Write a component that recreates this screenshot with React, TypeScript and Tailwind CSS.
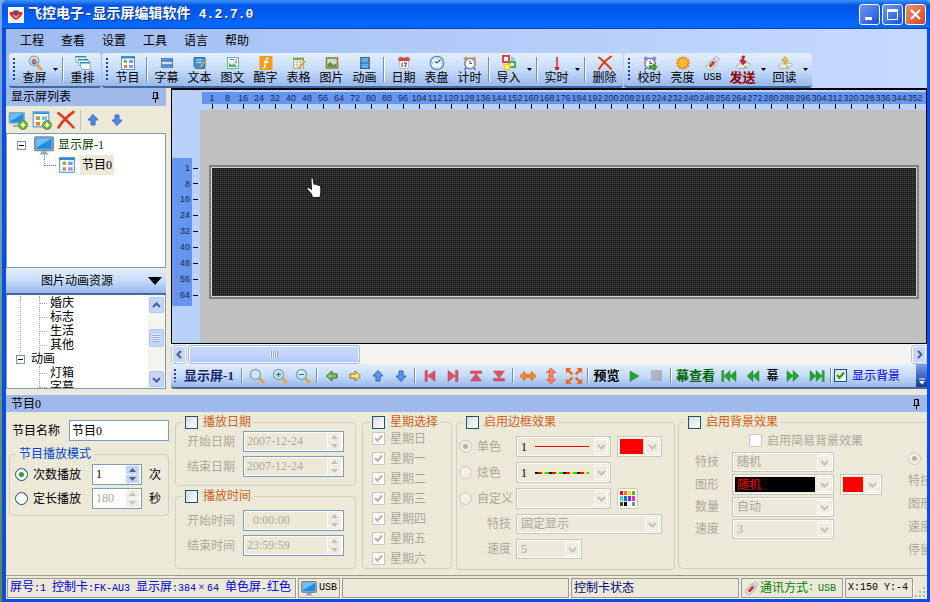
import { useState, type ReactNode } from 'react';
import clsx from 'clsx';

const BAR = 'bg-linear-to-b from-[#e4efff] via-[#c6dcfa] to-[#98b8ea] border-b-2 border-[#44689f]';
const MONO = "font-['Liberation_Mono','Noto_Sans_CJK_SC',monospace]";

function Svg({ children, size = 'size-4', box = '0 0 16 16' }: { children: ReactNode; size?: string; box?: string }) {
  return (
    <svg viewBox={box} className={clsx('shrink-0', size)} fill="none" aria-hidden="true">
      {children}
    </svg>
  );
}

/* ---------- icons ---------- */

const GridIcon = ({ size = 'size-4' }: { size?: string }) => (
  <Svg size={size}>
    <rect x="1.5" y="1.5" width="13" height="13" fill="#fff" stroke="#4b9fd8" />
    <path d="M1 2.5h14" stroke="#2f86cc" strokeWidth="2" />
    <path d="M4 5h3v3H4z" fill="#8fb03a" />
    <path d="M9 5h4v3H9z" fill="#5aa8e6" />
    <path d="M4 10h3v3H4z" fill="#ee7a4a" />
    <path d="M9 10h4v3H9z" fill="#a98be0" />
  </Svg>
);

const MonitorIcon = ({ size = 'size-5' }: { size?: string }) => (
  <Svg size={size}>
    <rect x="0.5" y="1.5" width="15" height="11" rx="1" fill="#8ca3b8" stroke="#7590aa" />
    <rect x="2" y="3" width="12" height="8" fill="#1f8ee8" />
    <path d="M2 3h12L2 10z" fill="#6cc0fa" />
    <path d="M6 13h4v1l2 1.500H4L6 14z" fill="#90a4b6" />
  </Svg>
);

const Plus = () => (
  <>
    <circle cx="12" cy="12" r="3.6" fill="#6fb52a" stroke="#4c9216" strokeWidth=".6" />
    <path d="M12 10v4M10 12h4" stroke="#fff" strokeWidth="1.3" />
  </>
);

const CrossIcon = ({ size = 'size-4' }: { size?: string }) => (
  <Svg size={size}>
    <path d="M2 2.5c4 3 8 7 12 11.5M14 1.5C9 5 5 9 2 14" stroke="#e8351a" strokeWidth="2" strokeLinecap="round" />
  </Svg>
);

const Magnifier = ({ sign }: { sign?: string }) => (
  <Svg>
    <path d="M10 10l4 4" stroke="#f0a030" strokeWidth="2.8" strokeLinecap="round" />
    <circle cx="6.5" cy="6.5" r="5" fill="#c4eafa" stroke="#8ea4b4" strokeWidth="1.4" />
    <path d="M3.500 6a3 3 0 0 1 3-2.500" stroke="#fff" />
    {sign && <path d={sign} stroke="#2a6ab0" strokeWidth="1.2" />}
  </Svg>
);

const ARROW = 'M8 2.5l5 5.5h-3v5H6V8H3z';
const ArrowIcon = ({ fill, stroke, turn = 0 }: { fill: string; stroke: string; turn?: number }) => (
  <Svg>
    <path d={ARROW} fill={fill} stroke={stroke} transform={`rotate(${turn} 8 8)`} />
  </Svg>
);

const AlignIcon = ({ turn = 0 }: { turn?: number }) => (
  <Svg>
    <g transform={`rotate(${turn} 8 8)`} fill="#dc5068" stroke="#b83c58" strokeWidth=".5">
      <path d="M3 2.500h2.400v11H3z" />
      <path d="M13 2.500v11L5.600 8z" />
    </g>
  </Svg>
);

const DoubleArrow = ({ turn = 0 }: { turn?: number }) => (
  <Svg size="size-[18px]">
    <path
      d="M1 8l4-4v2.400h6V4l4 4-4 4V9.600H5V12z"
      fill={turn ? '#ff8068' : '#ff8a2a'}
      stroke="#e0601a"
      strokeWidth=".8"
      transform={`rotate(${turn} 8 8)`}
    />
  </Svg>
);

const ExpandIcon = () => (
  <Svg size="size-[18px]">
    <path d="M2.500 2.500l4 4M13.500 2.500l-4 4M2.500 13.500l4-4M13.500 13.500l-4-4" stroke="#f0681c" strokeWidth="2.200" />
    <path d="M.8.8h5l-5 5zM15.200.8v5l-5-5zM.8 15.200v-5l5 5zM15.200 15.200h-5l5-5z" fill="#f0681c" />
  </Svg>
);

const GREEN = '#27a32e';
const PlayIcon = () => (
  <Svg>
    <path d="M4 3l9 5-9 5.500z" fill={GREEN} stroke="#1b8424" strokeWidth=".5" />
  </Svg>
);
const SkipIcon = ({ back, end }: { back?: boolean; end?: boolean }) => (
  <Svg>
    <g fill={GREEN} stroke="#177a20" strokeWidth=".4" transform={back ? 'rotate(180 8 8)' : undefined}>
      <path d="M1 2.500L7 8l-6 5.500zM7 2.500L13 8l-6 5.500z" />
      {end && <path d="M13.200 2.500h2v11h-2z" />}
    </g>
  </Svg>
);

const SearchScreenIcon = () => (
  <Svg>
    <path d="M10 10l4 4" stroke="#eaa23a" strokeWidth="3" strokeLinecap="round" />
    <circle cx="7" cy="6" r="4.800" fill="#cfeafa" stroke="#8aa0b8" strokeWidth="1.300" />
    <path d="M4 6l3-3 3 3-3 2z" fill="#f0602a" />
    <path d="M5 7l2 2 3-2" stroke="#2d6fd0" strokeWidth="1.400" />
  </Svg>
);

const RearrangeIcon = () => (
  <Svg>
    <path d="M.5 1.500h10l1 6h-10z" fill="#fff" stroke="#6aa4bc" strokeWidth=".8" />
    <path d="M3 4.500h10l1 6H4z" fill="#fff" stroke="#6aa4bc" strokeWidth=".8" />
    <path d="M5 7.500h10l.5 7H6.500z" fill="#fff" stroke="#6aa4bc" strokeWidth=".8" />
    <path d="M.5 1.800h10M3 4.800h10M5 7.800h10" stroke="#2f8aa8" strokeWidth="1.600" />
  </Svg>
);

const SubtitleIcon = () => (
  <Svg>
    <rect x="2.500" y="3.500" width="11" height="9" fill="#9cc4ee" stroke="#4a82c8" />
    <path d="M3 5.500h10M3 10.500h10" stroke="#3f78c0" strokeWidth="2" />
    <path d="M3 8h10" stroke="#fff" />
  </Svg>
);

const TextDocIcon = () => (
  <Svg>
    <path d="M2 2.500h11v11H4l-2-2z" fill="#3f92d6" stroke="#2d74b8" />
    <path d="M4.500 5h6M4.500 7.500h5" stroke="#d6ecff" />
    <path d="M14 6l-5 6-1.500 1.500.5-2.500 5-6z" fill="#f2c84a" stroke="#9a7a30" strokeWidth=".6" />
  </Svg>
);

const ImageTextIcon = () => (
  <Svg>
    <rect x="2.500" y="2.500" width="11" height="11" fill="#eef8ff" stroke="#62b4e4" />
    <path d="M5 4.500h4M11 4.500h1" stroke="#3f8ac8" />
    <path d="M4 12V8l3 2 2-2 3 4z" fill="#68b04a" />
    <circle cx="11" cy="7" r="1.300" fill="#f09030" />
  </Svg>
);

const CoolTextIcon = () => (
  <Svg>
    <rect x="1.500" y="1" width="13" height="14" fill="#f59b16" />
    <path d="M10.500 3.500c-2-.6-2.500 1-2.700 2.500L7 11c-.3 1.600-1 2-2 1.600M5.500 7h5" stroke="#fff" strokeWidth="1.500" />
  </Svg>
);

const TableIcon = () => (
  <Svg>
    <rect x="2.500" y="3" width="10" height="10" fill="#fffdf0" stroke="#a0a890" />
    <path d="M2 4h11" stroke="#6fae48" strokeWidth="2" />
    <path d="M2.500 7h10M2.500 10h10M6 4v9M9.500 4v9" stroke="#b8b090" strokeWidth=".8" />
    <path d="M14 6l-5 6-1 1.800" stroke="#e09a30" strokeWidth="1.800" />
  </Svg>
);

const PictureIcon = () => (
  <Svg>
    <rect x="2.500" y="3" width="11" height="10" fill="#bfe4f8" stroke="#a8772c" strokeWidth="1.600" />
    <path d="M3.500 12V9l3-2 3 3 3-2v4z" fill="#4f9c3a" />
    <circle cx="10.500" cy="6" r="1.200" fill="#f4d040" />
  </Svg>
);

const FilmIcon = () => (
  <Svg>
    <rect x="3" y="2" width="10" height="12" fill="#3a5f8a" />
    <path d="M5 3h6v4.500H5zM5 8.500h6V13H5z" fill="#58b0f0" />
    <path d="M4 3v10M12 3v10" stroke="#d8e8f8" strokeDasharray="1 1" strokeWidth=".8" />
  </Svg>
);

const CalendarIcon = () => (
  <Svg>
    <path d="M3 4h10l-1 9.500H4z" fill="#fff" stroke="#a8a8a8" strokeWidth=".8" />
    <path d="M2.500 2.500h11v3.500h-11z" fill="#d8452c" />
    <path d="M6 8v4M8 8h2.500L9 12" stroke="#333" />
    <path d="M5 1.500v2M11 1.500v2" stroke="#777" />
  </Svg>
);

const ClockIcon = () => (
  <Svg>
    <circle cx="8" cy="8" r="6.600" fill="#eef6ff" stroke="#4a90d8" strokeWidth="1.400" />
    <path d="M8 8l3.500-3.500M8 8l-2-1.500" stroke="#2a5fa8" strokeWidth="1.200" />
    <path d="M8 2.800v1M8 12.200v1M2.800 8h1M12.200 8h1" stroke="#5a7aa0" />
  </Svg>
);

const AlarmIcon = ({ sync }: { sync?: boolean }) => (
  <Svg>
    <circle cx="3.800" cy="3.500" r="2" fill={sync ? '#8f86dc' : '#e8a040'} />
    <circle cx="12.200" cy="3.500" r="2" fill={sync ? '#8f86dc' : '#e8a040'} />
    <path d="M4 13l-1.500 2M12 13l1.500 2" stroke="#6a6090" strokeWidth="1.400" />
    <circle cx="8" cy="8.500" r="5.200" fill="#fdfbe8" stroke="#7f78c8" strokeWidth="1.500" />
    <path d="M8 5.500v3h2" stroke="#444" />
    {sync && <path d="M7 10.500h4V8.500l4.500 3.500-4.500 3.500v-2H7z" fill="#4aa82a" stroke="#2f7f18" strokeWidth=".5" />}
  </Svg>
);

const ImportIcon = () => (
  <Svg>
    <rect x="2" y="1" width="6" height="6" fill="#fff" stroke="#e0303c" strokeWidth="1.800" />
    <path d="M10 1l4 2-1 4h-3z" fill="#9cc4f0" />
    <rect x="8.500" y="7" width="5.500" height="5" fill="#fff" stroke="#2cae3c" strokeWidth="1.800" />
    <rect x="3.500" y="9.500" width="5" height="5" fill="#fff" stroke="#f2d020" strokeWidth="2" />
  </Svg>
);

const ThermoIcon = () => (
  <Svg>
    <path d="M8 1v11" stroke="#dcdcdc" strokeWidth="3" />
    <path d="M8 2v10" stroke="#d8202c" strokeWidth="1.400" />
    <path d="M5.500 12h5l-1 3h-3z" fill="#d8202c" />
  </Svg>
);

const SunIcon = () => (
  <Svg>
    <path
      d="M8 .5l1.300 2.300L11.700 1.500l.2 2.700 2.700-.1-1.200 2.400L15.500 8l-2.100 1.500 1.200 2.400-2.700-.1-.2 2.700-2.400-1.300L8 15.500l-1.300-2.300-2.400 1.300-.2-2.700-2.700.1 1.200-2.400L.5 8l2.100-1.500-1.200-2.400 2.700.1.2-2.700 2.400 1.300z"
      fill="#f08a1c"
    />
    <circle cx="8" cy="8" r="4.500" fill="#ffb930" />
  </Svg>
);

const UsbIcon = () => (
  <Svg>
    <g transform="rotate(42 8 8)">
      <rect x="5" y="4.500" width="6" height="11" rx="1.500" fill="#f4f4f4" stroke="#9a9a9a" strokeWidth=".8" />
      <rect x="6" y="1" width="4" height="3.500" fill="#e8eef4" stroke="#8a96a4" strokeWidth=".8" />
      <path d="M6.500 6h3v7h-3z" fill="#dc3428" />
    </g>
  </Svg>
);

const DriveIcon = ({ up }: { up?: boolean }) => (
  <Svg>
    <path d="M1 11l4-3h9l1.500 1.500-4 4H3z" fill="#e4e4e4" stroke="#a0a0a0" strokeWidth=".7" />
    <circle cx="10.500" cy="12" r=".9" fill="#52b040" />
    {up ? (
      <path d="M9 10V6h2.500L8 1.500 4.500 5.500H7V8z" fill="#f6c030" stroke="#b88a18" strokeWidth=".6" />
    ) : (
      <path d="M10 1H7v4H4.500L8 10l3.500-4H9V3z" fill="#d02c38" stroke="#9a1824" strokeWidth=".6" />
    )}
  </Svg>
);

const PinIcon = () => (
  <Svg size="h-3 w-[9px]" box="0 0 9 12">
    <path d="M2.500 7V1.500h4V7M6 1.500V7M1 7.500h7M4.500 8v3.500" stroke="#000" />
  </Svg>
);

const Chevron = ({ turn = 0, color = '#4d6185', size = 'size-[9px]' }: { turn?: number; color?: string; size?: string }) => (
  <Svg size={size} box="0 0 9 9">
    <path d="M1 3l3.500 3.500L8 3" stroke={color} strokeWidth="2" transform={`rotate(${turn} 4.5 4.5)`} />
  </Svg>
);

/* ---------- toolbar pieces ---------- */

const Grip = () => (
  <span className="flex w-2 shrink-0 justify-center self-stretch py-[5px]">
    <span className="w-[2px] bg-[repeating-linear-gradient(#27418f_0_2px,transparent_2px_4px)]" />
  </span>
);

const Sep = () => (
  <span className="flex w-[6px] shrink-0 justify-center self-stretch py-1">
    <span className="w-[2px] border-l border-[#6a8ccb] bg-white" />
  </span>
);

const Drop = () => (
  <span className="flex w-[9px] shrink-0 items-center justify-center">
    <Svg size="h-[3px] w-[5px]" box="0 0 5 3">
      <path d="M0 0h5L2.500 3z" fill="#000" />
    </Svg>
  </span>
);

function Tool({ icon, label, className }: { icon: ReactNode; label: string; className?: string }) {
  return (
    <button
      type="button"
      className={clsx('flex shrink-0 flex-col items-center pt-[2px] whitespace-nowrap', className ?? 'w-[33px]')}
    >
      {icon}
      <span className="leading-[14px]">{label}</span>
    </button>
  );
}

const Mini = ({ label, children }: { label: string; children: ReactNode }) => (
  <button type="button" aria-label={label} className="flex w-[23px] shrink-0 items-center justify-center">
    {children}
  </button>
);

/* ---------- form controls ---------- */

type Opt = { disabled?: boolean; defaultChecked?: boolean };

const Tick = ({ id, label, disabled, defaultChecked }: Opt & { id: string; label: string }) => (
  <span className={clsx('flex items-center gap-[5px] whitespace-nowrap', disabled && 'text-[#aca899]')}>
    <span className="relative flex size-[13px] shrink-0">
      <input
        id={id}
        type="checkbox"
        disabled={disabled}
        defaultChecked={defaultChecked}
        className="peer size-[13px] appearance-none border border-[#1c5180] bg-linear-to-br from-[#dcdcd7] to-white disabled:border-[#cac8bb] disabled:from-white"
      />
      <svg viewBox="0 0 13 13" className="pointer-events-none absolute inset-0 hidden peer-checked:block" fill="none">
        <path d="M3 6l2.500 3L10 3.500" stroke={disabled ? '#b5b3a6' : '#21a121'} strokeWidth="2" />
      </svg>
    </span>
    <label htmlFor={id}>{label}</label>
  </span>
);

const Dot = ({ id, name, disabled, defaultChecked, label }: Opt & { id: string; name: string; label: string }) => (
  <span className={clsx('flex shrink-0 items-center gap-[5px] whitespace-nowrap', disabled && 'text-[#aca899]')}>
    <span className="relative flex size-[13px] shrink-0">
      <input
        id={id}
        type="radio"
        name={name}
        disabled={disabled}
        defaultChecked={defaultChecked}
        className="peer size-[13px] appearance-none rounded-full border border-[#1c5180] bg-white disabled:border-[#cac8bb] disabled:bg-[#f1efe4]"
      />
      <span
        className={clsx(
          'pointer-events-none absolute inset-[4px] hidden rounded-full peer-checked:block',
          disabled ? 'bg-[#b5b3a6]' : 'bg-[#22a522]'
        )}
      />
    </span>
    <label htmlFor={id}>{label}</label>
  </span>
);

function Spin({ id, value, width, disabled, grey }: { id: string; value: string; width: string; disabled?: boolean; grey?: boolean }) {
  const color = disabled ? '#c3c1b4' : '#4d6185';
  const half = clsx('flex h-2 w-[13px] items-center justify-center', disabled ? 'bg-[#f0eee4]' : 'bg-[#c2d3fc]');
  return (
    <span
      className={clsx(
        'flex h-[21px] shrink-0 items-center justify-between border border-[#7f9db9] pr-[2px]',
        grey ? 'bg-[#ece9d8] shadow-[inset_0_0_0_1px_#fff]' : 'bg-white',
        width
      )}
    >
      <input
        id={id}
        defaultValue={value}
        disabled={disabled}
        className={clsx('w-0 flex-1 bg-transparent pl-[3px] pb-[2px] whitespace-pre', disabled ? 'text-[#aca899]' : 'text-black')}
      />
      <span className="flex flex-col gap-px outline outline-white">
        <button type="button" aria-label="增加" disabled={disabled} className={half}>
          <Svg size="h-1 w-[7px]" box="0 0 7 4"><path d="M0 4h7L3.500 0z" fill={color} /></Svg>
        </button>
        <button type="button" aria-label="减少" disabled={disabled} className={half}>
          <Svg size="h-1 w-[7px]" box="0 0 7 4"><path d="M0 0h7L3.500 4z" fill={color} /></Svg>
        </button>
      </span>
    </span>
  );
}

function Combo({ id, value, width, height = 'h-5', tone, label, children }: {
  id: string;
  value: string;
  width: string;
  height?: string;
  tone?: string;
  label?: string;
  children?: ReactNode;
}) {
  return (
    <span className={clsx('relative flex shrink-0 border border-[#c9c7ba] bg-[#ece9d8] p-px shadow-[inset_0_0_0_1px_#fff]', width, height)}>
      <select
        id={id}
        aria-label={label}
        disabled
        className={clsx('m-px mr-[17px] w-full appearance-none pl-[2px] leading-[14px] opacity-100', tone ?? 'text-[#aca899]')}
      >
        <option>{value}</option>
      </select>
      {children}
      <span className="pointer-events-none absolute inset-y-[2px] right-[2px] flex w-[14px] items-center justify-center border border-white bg-[#efede2]">
        <Chevron color="#c3c1b4" />
      </span>
    </span>
  );
}

const Group = ({ legend, className, body, children }: { legend: ReactNode; className?: string; body: string; children: ReactNode }) => (
  <fieldset className={clsx('min-w-0 rounded-[4px] border border-[#d0d0bf]', className)}>
    <legend className="ml-[6px] bg-[#ece9d8] px-[3px] leading-[14px] text-[#d2601a]">{legend}</legend>
    <div className={body}>{children}</div>
  </fieldset>
);

const Row = ({ id, label, width, children }: { id: string; label: string; width: string; children: ReactNode }) => (
  <div className="flex items-center text-[#aca899]">
    <label htmlFor={id} className={clsx('shrink-0 whitespace-nowrap', width)}>{label}</label>
    {children}
  </div>
);

/* ---------- window parts ---------- */

function TitleBar() {
  const btn = 'flex size-[21px] items-center justify-center rounded-[3px] border border-white';
  const blue = 'bg-linear-to-br from-[#6f97f5] to-[#1b4fd8]';
  return (
    <header className="flex h-[29px] items-center gap-1 rounded-t-[6px] border-b border-[#0640c0] bg-linear-to-b from-[#3c91ff] via-[#0054e3] via-20% to-[#0468ff] to-90% pt-px pr-1 pl-[6px]">
      <Svg>
        <path d="M0 0h16v16H0z" fill="#fff" />
        <path d="M1 6c3-2 5-2 7 0 2-2 4-2 7 0-2 4-5 6-7 7-2-1-5-3-7-7z" fill="#e0302c" />
        <path d="M5 3.500h6L8 8z" fill="#2a50a0" />
        <path d="M5 8l3 2.500L11 8" stroke="#fff" />
      </Svg>
      <h1 className={clsx('flex-1 truncate text-[14px] leading-5 font-bold text-white [text-shadow:1px_1px_#0a2f90]', MONO)}>
        飞控电子-显示屏编辑软件 <span className="text-[13px]">4.2.7.0</span>
      </h1>
      <div className="flex gap-[2px]">
        <button type="button" aria-label="最小化" className={clsx(btn, blue)}>
          <Svg size="size-[13px]" box="0 0 13 13"><path d="M2 9h7v3H2z" fill="#fff" /></Svg>
        </button>
        <button type="button" aria-label="最大化" className={clsx(btn, blue)}>
          <Svg size="size-[13px]" box="0 0 13 13"><path d="M1.500 3v8.500h10V3M1 2.500h11" stroke="#fff" /><path d="M1 1h11v3H1z" fill="#fff" /></Svg>
        </button>
        <button type="button" aria-label="关闭" className={clsx(btn, 'bg-linear-to-br from-[#f0906c] to-[#d0401c]')}>
          <Svg size="size-[13px]" box="0 0 13 13"><path d="M2 2l9 9M11 2l-9 9" stroke="#fff" strokeWidth="2.200" /></Svg>
        </button>
      </div>
    </header>
  );
}

const MENUS = ['工程', '查看', '设置', '工具', '语言', '帮助'];

function TopToolbars() {
  const bar = clsx('flex rounded-[3px] pr-[2px] pl-px', BAR);
  return (
    <div className="flex h-[35px] items-stretch gap-px pl-[3px]">
      <div className={bar}>
        <Grip />
        <Tool icon={<SearchScreenIcon />} label="查屏" />
        <Drop />
        <Sep />
        <Tool icon={<RearrangeIcon />} label="重排" />
      </div>
      <div className={bar}>
        <Grip />
        <Tool icon={<GridIcon />} label="节目" />
        <Sep />
        <Tool icon={<SubtitleIcon />} label="字幕" />
        <Tool icon={<TextDocIcon />} label="文本" />
        <Tool icon={<ImageTextIcon />} label="图文" />
        <Tool icon={<CoolTextIcon />} label="酷字" />
        <Tool icon={<TableIcon />} label="表格" />
        <Tool icon={<PictureIcon />} label="图片" />
        <Tool icon={<FilmIcon />} label="动画" />
        <Sep />
        <Tool icon={<CalendarIcon />} label="日期" />
        <Tool icon={<ClockIcon />} label="表盘" />
        <Tool icon={<AlarmIcon />} label="计时" />
        <Sep />
        <Tool icon={<ImportIcon />} label="导入" />
        <Drop />
        <Sep />
        <Tool icon={<ThermoIcon />} label="实时" />
        <Drop />
        <Sep />
        <Tool icon={<CrossIcon />} label="删除" />
      </div>
      <div className={bar}>
        <Grip />
        <Tool icon={<AlarmIcon sync />} label="校时" />
        <Tool icon={<SunIcon />} label="亮度" />
        <Tool icon={<UsbIcon />} label="USB" className={clsx('w-[27px] text-[10px]', MONO)} />
        <Tool icon={<DriveIcon />} label="发送" className="w-[33px] text-[13px] font-bold text-[#900000]" />
        <Drop />
        <Tool icon={<DriveIcon up />} label="回读" />
        <Drop />
      </div>
    </div>
  );
}

const Expander = () => (
  <button type="button" aria-label="折叠" className="flex size-[9px] items-center justify-center border border-[#7898b5] bg-white">
    <span className="h-px w-[5px] bg-black" />
  </button>
);

const RESOURCES = ['婚庆', '标志', '生活', '其他'];

function Sidebar() {
  const scrollBtn = 'flex w-[15px] items-center justify-center rounded-[2px] border border-white bg-[#c5d5fc] outline outline-[#b3c6f2] -outline-offset-1';
  return (
    <aside className="flex w-40 shrink-0 flex-col">
      <div className="flex h-[18px] items-center justify-between bg-[#9fb9ea] pr-[6px] pl-[5px]">
        <h2>显示屏列表</h2>
        <button type="button" aria-label="固定"><PinIcon /></button>
      </div>
      <div className="flex h-[27px] items-center pl-[2px]">
        <button type="button" aria-label="添加显示屏" className="w-6">
          <Svg size="size-5">
            <rect x=".5" y="1.500" width="13" height="9.500" rx="1" fill="#8ca3b8" />
            <rect x="1.800" y="2.800" width="10.400" height="7" fill="#1f8ee8" />
            <path d="M1.800 2.800h10.400L1.800 9z" fill="#6cc0fa" />
            <path d="M4 12h6v1.500H4z" fill="#90a4b6" />
            <Plus />
          </Svg>
        </button>
        <button type="button" aria-label="添加节目" className="w-6">
          <Svg size="size-5">
            <rect x="1" y="1.500" width="12.500" height="12" fill="#fff" stroke="#5b9fd4" />
            <path d="M1 2.500h12.500" stroke="#3f8fd0" strokeWidth="1.500" />
            <path d="M3 5h3.500v3H3z" fill="#8fb03a" />
            <path d="M8 5h4v3H8z" fill="#7cbcf0" />
            <path d="M3 9.500h3.500v3H3z" fill="#ee7a4a" />
            <Plus />
          </Svg>
        </button>
        <button type="button" aria-label="删除" className="w-6"><CrossIcon size="size-5" /></button>
        <span className="h-5 w-px bg-[#c5c2b0]" />
        <button type="button" aria-label="上移" className="flex w-6 justify-center"><ArrowIcon fill="#4f86ea" stroke="#3c68c4" /></button>
        <button type="button" aria-label="下移" className="flex w-6 justify-center"><ArrowIcon fill="#4f86ea" stroke="#3c68c4" turn={180} /></button>
      </div>
      <div className="flex-1 border border-[#7f9db9] bg-white pt-px pl-[10px]">
        <div className="flex h-5 items-center">
          <Expander />
          <span className="ml-2 flex"><MonitorIcon /></span>
          <span className="ml-1 text-[#003c00]">显示屏-1</span>
        </div>
        <div className="flex h-5 items-center">
          <span className="ml-[27px] h-[11px] w-3 self-start border-b border-l border-dotted border-[#7a6ae0]" />
          <span className="ml-[2px] flex"><GridIcon size="size-[18px]" /></span>
          <span className="ml-1 bg-[#ece9d8] px-[2px] leading-5">节目0</span>
        </div>
      </div>
      <button type="button" className={clsx('flex h-[27px] items-center justify-between pr-1 pl-[35px]', BAR)}>
        图片动画资源
        <Svg size="h-2 w-[14px]" box="0 0 14 8"><path d="M0 0h14L7 8z" fill="#000" /></Svg>
      </button>
      <div className="flex h-[94px] border border-t-0 border-[#7f9db9] bg-white">
        <ul className="flex-1 overflow-hidden pt-px pl-[13px] leading-[14px]">
          <li className="h-14 border-l border-dotted border-[#aca899] pl-[18px]">
            <ul className="border-l border-dotted border-[#aca899]">
              {RESOURCES.map((name) => (
                <li key={name} className="flex h-[14px] items-center gap-[3px]">
                  <span className="w-[7px] border-t border-dotted border-[#aca899]" />
                  {name}
                </li>
              ))}
            </ul>
          </li>
          <li>
            <div className="-ml-1 flex h-[14px] items-center gap-[6px]"><Expander />动画</div>
            <ul className="ml-[19px] border-l border-dotted border-[#aca899]">
              {['灯箱', '字幕'].map((name) => (
                <li key={name} className="flex h-[14px] items-center gap-[3px]">
                  <span className="w-[7px] border-t border-dotted border-[#aca899]" />
                  {name}
                </li>
              ))}
            </ul>
          </li>
        </ul>
        <div className="flex w-[17px] flex-col items-center bg-[#f4f3ee] pt-[2px] pb-px">
          <button type="button" aria-label="向上滚动" className={clsx('h-4', scrollBtn)}><Chevron turn={180} /></button>
          <span className="flex-[4]" />
          <button type="button" aria-label="滚动条" className={clsx('h-[18px]', scrollBtn)}>
            <span className="h-2 w-[7px] bg-[repeating-linear-gradient(#eef4fe_0_1px,#8fa9e0_1px_2px)]" />
          </button>
          <span className="flex-[6]" />
          <button type="button" aria-label="向下滚动" className={clsx('h-4', scrollBtn)}><Chevron /></button>
        </div>
      </div>
    </aside>
  );
}

const COLS = [1, ...Array.from({ length: 44 }, (_, i) => (i + 1) * 8)];
const ROWS = COLS.slice(0, 9);

function Canvas() {
  const cell = (n: number) => (n === 8 ? 'w-[15px]' : 'w-4');
  const line = (n: number) => (n === 8 ? 'h-[15px]' : 'h-4');
  return (
    <div className="flex flex-1 flex-col overflow-hidden border border-t-2 border-black bg-[#b9d1fb] font-['Liberation_Sans',sans-serif] text-[9px] leading-3 text-[#1a2a50]">
      <div className="h-5 pl-[30px]">
        <div className="mt-[2px] flex h-3 overflow-hidden bg-[#6595ed] pl-[2px]">
          {COLS.map((n) => (
            <span key={n} className={clsx('flex shrink-0 justify-center', cell(n))}>{n}</span>
          ))}
        </div>
        <div className="flex h-[5px] overflow-hidden pl-[2px]">
          {COLS.map((n) => (
            <span key={n} className={clsx('flex shrink-0 justify-center', cell(n))}><i className="w-px bg-black" /></span>
          ))}
        </div>
      </div>
      <div className="flex flex-1">
        <div className="flex w-7 items-start gap-px pt-12">
          <div className="h-[148px] w-5 bg-[#6595ed] pt-[2px]">
            {ROWS.map((n) => (
              <span key={n} className={clsx('flex items-center justify-end pr-[2px]', line(n))}>{n}</span>
            ))}
          </div>
          <div className="pt-[2px]">
            {ROWS.map((n) => (
              <span key={n} className={clsx('flex items-center', line(n))}><i className="h-px w-[5px] bg-black" /></span>
            ))}
          </div>
        </div>
        <div className="flex-1 bg-[#c0c0c0] pt-[55px] pr-[7px] pl-[9px]">
          <div className="relative h-[134px] border-2 border-[#808080] bg-[conic-gradient(#4a4a4a_25%,#202020_0)] bg-[length:2px_2px] outline outline-[#d0d0d0] -outline-offset-3">
            <svg viewBox="0 0 17 22" className="absolute top-[10px] left-[95px] h-[22px] w-[17px]" aria-hidden="true">
              <path
                d="M5 2c0-1.500 2-1.500 2.200 0L8 7.500c.5-1 2-.7 2.200.5.700-.8 2-.4 2.200.7.800-.6 2-.2 2.100.9.200 2 .6 4 .2 6L14 20.500H6.500L5.500 17 1.500 12.500c-1-1.500 0-2.500 1.300-1.900L5.500 12.500z"
                fill="#fff"
                stroke="#000"
                strokeWidth=".8"
              />
            </svg>
          </div>
        </div>
      </div>
    </div>
  );
}

function CanvasToolbar() {
  return (
    <div className={clsx('flex h-[25px] items-stretch overflow-hidden rounded-l-[3px] whitespace-nowrap', BAR)}>
      <Grip />
      <strong className="flex w-[60px] shrink-0 items-center justify-center text-[13px] text-[#17246b]">显示屏-1</strong>
      <Sep />
      <Mini label="缩放"><Magnifier /></Mini>
      <Mini label="放大"><Magnifier sign="M4 6.500h5M6.500 4v5" /></Mini>
      <Mini label="缩小"><Magnifier sign="M4 6.500h5" /></Mini>
      <Sep />
      <Mini label="左移"><ArrowIcon fill="#8cc25c" stroke="#37682a" turn={-90} /></Mini>
      <Mini label="右移"><ArrowIcon fill="#fbe27a" stroke="#8e6c14" turn={90} /></Mini>
      <Mini label="上移"><ArrowIcon fill="#5c94f2" stroke="#3262c4" /></Mini>
      <Mini label="下移"><ArrowIcon fill="#5c94f2" stroke="#3262c4" turn={180} /></Mini>
      <Sep />
      <Mini label="左对齐"><AlignIcon /></Mini>
      <Mini label="右对齐"><AlignIcon turn={180} /></Mini>
      <Mini label="上对齐"><AlignIcon turn={90} /></Mini>
      <Mini label="下对齐"><AlignIcon turn={-90} /></Mini>
      <Sep />
      <Mini label="水平拉伸"><DoubleArrow /></Mini>
      <Mini label="垂直拉伸"><DoubleArrow turn={90} /></Mini>
      <Mini label="铺满"><ExpandIcon /></Mini>
      <Sep />
      <button type="button" className="w-[31px] shrink-0 text-[13px] font-bold">预览</button>
      <Mini label="播放"><PlayIcon /></Mini>
      <Mini label="停止"><span className="size-[11px] bg-linear-to-br from-[#b8bec8] to-[#a2a9b6]" /></Mini>
      <Sep />
      <strong className="flex w-[43px] shrink-0 items-center justify-center text-[13px] text-[#006400]">幕查看</strong>
      <Mini label="第一幕"><SkipIcon back end /></Mini>
      <Mini label="上一幕"><SkipIcon back /></Mini>
      <span className="flex w-[19px] shrink-0 items-center justify-center font-medium">幕</span>
      <Mini label="下一幕"><SkipIcon /></Mini>
      <Mini label="最后一幕"><SkipIcon end /></Mini>
      <Sep />
      <span className="flex text-[#0000e8]"><Tick id="show-bg" label="显示背景" defaultChecked /></span>
      <button type="button" aria-label="更多" className="ml-auto flex w-[11px] items-end justify-center bg-linear-to-b from-[#7ba0e4] to-[#0c3a98] pb-[2px]">
        <Svg size="h-[7px] w-[6px]" box="0 0 6 7">
          <path d="M0 1h6" stroke="#fff" />
          <path d="M0 3h6L3 6.500z" fill="#fff" />
        </Svg>
      </button>
    </div>
  );
}

function Workspace() {
  const end = 'flex h-[17px] w-[14px] shrink-0 items-center justify-center rounded-[2px] border border-white bg-[#c5d5fc] outline outline-[#b3c6f2]';
  return (
    <section className="flex min-w-0 flex-1 flex-col">
      <Canvas />
      <div className="flex h-5 items-center gap-[3px] bg-[#f5f4ef] px-px">
        <button type="button" aria-label="向左滚动" className={end}><Chevron turn={90} /></button>
        <button type="button" aria-label="滚动条" className="flex h-[17px] w-[170px] items-center justify-center rounded-[2px] border border-white bg-linear-to-b from-[#cbdafe] to-[#b6cafa] outline outline-[#a5bbee]">
          <span className="h-[7px] w-2 bg-[repeating-linear-gradient(90deg,#eef4fe_0_1px,#8fa9e0_1px_2px)]" />
        </button>
        <span className="flex-1" />
        <button type="button" aria-label="向右滚动" className={end}><Chevron turn={-90} /></button>
      </div>
      <CanvasToolbar />
    </section>
  );
}

const DAYS = ['日', '一', '二', '三', '四', '五', '六'];
const PALETTE = ['#f00', '#f57c00', '#f5e000', '#5ab82a', '#3cdcdc', '#1464f0', '#7a28e0', '#f028c8', '#703810', '#000', '#fff', '#888'];

function Properties() {
  const [name, setName] = useState('节目0');
  return (
    <div className="flex items-start overflow-hidden pb-[5px] pl-[3px]">
      <div className="w-40 shrink-0 pt-2">
        <div className="flex items-center pl-[3px]">
          <label htmlFor="program" className="w-[57px] whitespace-nowrap">节目名称</label>
          <input
            id="program"
            value={name}
            onChange={(e) => setName(e.target.value)}
            className="h-[21px] w-0 flex-1 border border-[#7f9db9] bg-white px-[2px] pb-[2px]"
          />
        </div>
        <Group className="mt-[6px]" body="flex flex-col gap-[3px] pt-[3px] pb-[6px] pl-[5px]" legend={<span className="text-[#0046d5]">节目播放模式</span>}>
          <div className="flex items-center">
            <span className="w-[77px]"><Dot id="by-count" name="mode" label="次数播放" defaultChecked /></span>
            <Spin id="count" value="1" width="w-[50px]" />
            <label htmlFor="count" className="ml-[7px]">次</label>
          </div>
          <div className="flex items-center">
            <span className="w-[77px]"><Dot id="by-time" name="mode" label="定长播放" /></span>
            <Spin id="seconds" value="180" width="w-[50px]" disabled />
            <label htmlFor="seconds" className="ml-[7px]">秒</label>
          </div>
        </Group>
      </div>

      <div className="ml-[6px] flex w-[181px] shrink-0 flex-col gap-[3px] pt-[3px]">
        <Group body="flex flex-col gap-1 pt-[2px] pb-2 pl-[11px]" legend={<Tick id="by-date" label="播放日期" />}>
          <Row id="d1" label="开始日期" width="w-14"><Spin id="d1" value="2007-12-24" width="w-[101px]" disabled grey /></Row>
          <Row id="d2" label="结束日期" width="w-14"><Spin id="d2" value="2007-12-24" width="w-[101px]" disabled grey /></Row>
        </Group>
        <Group body="flex flex-col gap-1 pt-[7px] pb-3 pl-[11px]" legend={<Tick id="by-clock" label="播放时间" />}>
          <Row id="t1" label="开始时间" width="w-14"><Spin id="t1" value="  0:00:00" width="w-[101px]" disabled grey /></Row>
          <Row id="t2" label="结束时间" width="w-14"><Spin id="t2" value="23:59:59" width="w-[101px]" disabled grey /></Row>
        </Group>
      </div>

      <div className="ml-[6px] w-[90px] shrink-0 pt-[3px]">
        <Group body="flex flex-col gap-px pl-[9px]" legend={<Tick id="by-week" label="星期选择" />}>
          {DAYS.map((d) => (
            <span key={d} className="flex h-[19px]"><Tick id={`day-${d}`} label={`星期${d}`} disabled defaultChecked /></span>
          ))}
        </Group>
      </div>

      <div className="ml-1 w-[219px] shrink-0 pt-[3px]">
        <Group body="flex flex-col gap-[5px] pt-[7px] pb-[10px] pl-[2px]" legend={<Tick id="use-border" label="启用边框效果" />}>
          <div className="flex items-center gap-[6px]">
            <span className="w-[51px]"><Dot id="solid" name="frame" label="单色" disabled defaultChecked /></span>
            <Combo id="solid-line" label="单色边框" value="1" width="w-[95px]" height="h-[21px]" tone="text-black">
              <span className="pointer-events-none absolute top-[9px] left-[18px] h-px w-[54px] bg-[#f00000]" />
            </Combo>
            <Combo id="solid-color" label="边框颜色" value="" width="w-[45px]" height="h-[21px]" tone="bg-[#ff0000]" />
          </div>
          <div className="flex items-center gap-[6px]">
            <span className="w-[51px]"><Dot id="dazzle" name="frame" label="炫色" disabled /></span>
            <Combo id="dazzle-line" label="炫色边框" value="1" width="w-[95px]" height="h-[21px]" tone="text-black">
              <span className="pointer-events-none absolute top-[9px] left-[18px] h-[2px] w-[54px] bg-[repeating-linear-gradient(90deg,#000_0_3px,#f00_3px_7px,#ff0_7px_10px,#0e0_10px_14px)]" />
            </Combo>
          </div>
          <div className="flex items-center gap-[6px]">
            <span className="w-[51px]"><Dot id="custom" name="frame" label="自定义" disabled /></span>
            <Combo id="custom-line" label="自定义边框" value="" width="w-[95px]" height="h-[21px]" />
            <button type="button" aria-label="调色板" className="grid size-[21px] grid-cols-4 gap-px rounded-[3px] border border-[#c9c7ba] bg-white p-[2px]">
              {PALETTE.map((c) => <i key={c} style={{ background: c }} />)}
            </button>
          </div>
          <div className="pl-7"><Row id="fx" label="特技" width="w-[29px]"><Combo id="fx" value="固定显示" width="w-[146px]" /></Row></div>
          <div className="pl-7"><Row id="fx-speed" label="速度" width="w-[29px]"><Combo id="fx-speed" value="5" width="w-[66px]" /></Row></div>
        </Group>
      </div>

      <div className="ml-[3px] min-w-[260px] flex-1 pt-[3px]">
        <Group body="flex h-[139px] pl-4" legend={<Tick id="use-bg" label="启用背景效果" />}>
          <div className="w-[213px] shrink-0 pt-[3px]">
            <span className="flex h-[17px] pl-[54px]"><Tick id="simple-bg" label="启用简易背景效果" disabled /></span>
            <div className="flex flex-col gap-[2px] pt-[3px]">
              <Row id="bg-fx" label="特技" width="w-[37px]"><Combo id="bg-fx" value="随机" width="w-[102px]" /></Row>
              <div className="flex gap-[6px]">
                <Row id="bg-shape" label="图形" width="w-[37px]"><Combo id="bg-shape" value="随机" width="w-[102px]" height="h-[21px]" tone="bg-black text-[#ff0000]" /></Row>
                <Combo id="bg-color" label="背景颜色" value="" width="w-[42px]" height="h-[21px]" tone="bg-[#ff0000]" />
              </div>
              <Row id="bg-count" label="数量" width="w-[37px]"><Combo id="bg-count" value="自动" width="w-[102px]" /></Row>
              <Row id="bg-speed" label="速度" width="w-[37px]"><Combo id="bg-speed" value="3" width="w-[102px]" /></Row>
            </div>
          </div>
          <div className="flex flex-col gap-[9px] pt-[22px] leading-[14px] whitespace-nowrap text-[#aca899]">
            <Dot id="mix" name="bg-mode" label="随机" disabled defaultChecked />
            <span>特技</span>
            <span>图形</span>
            <span>速度</span>
            <span>停留</span>
          </div>
        </Group>
      </div>
    </div>
  );
}

const Latin = ({ children }: { children: ReactNode }) => <span className={clsx('text-[10px]', MONO)}>{children}</span>;

function StatusBar() {
  const cell = 'flex h-5 shrink-0 items-center border border-[#9d9a8a] px-[2px] shadow-[1px_1px_#fff] whitespace-nowrap';
  return (
    <footer className="flex h-6 items-center gap-[2px] border-t border-[#9d9a8a] pl-px">
      <div className={clsx(cell, 'w-[289px] gap-[6px] text-[#0000e0]')}>
        <span>屏号<Latin>:1</Latin></span>
        <span>控制卡<Latin>:FK-AU3</Latin></span>
        <span>显示屏<Latin>:384</Latin><span className="px-[2px]">×</span><Latin>64</Latin></span>
        <span>单色屏<Latin>-</Latin>红色</span>
      </div>
      <div className={clsx(cell, 'w-[42px] gap-[2px]')}><MonitorIcon size="size-4" /><Latin>USB</Latin></div>
      <div className={clsx(cell, 'w-[227px]')} />
      <div className={clsx(cell, 'min-w-0 flex-1 text-[#000080]')}>控制卡状态</div>
      <div className={clsx(cell, 'w-[102px] text-[#008000]')}>
        <UsbIcon />通讯方式<Latin>:</Latin><span className="ml-1"><Latin>USB</Latin></span>
      </div>
      <div className={clsx(cell, 'w-[68px]')}><Latin>X:150 Y:-4</Latin></div>
      <Svg size="size-3 self-end" box="0 0 12 12">
        <path d="M8 0h2v2H8zM4 4h2v2H4zM8 4h2v2H8zM0 8h2v2H0zM4 8h2v2H4zM8 8h2v2H8z" fill="#b8b5a2" />
      </Svg>
    </footer>
  );
}

export default function App() {
  return (
    <div className="flex min-h-screen bg-linear-to-b from-[#7da4e0] to-[#5c8a3a] pl-[2px] font-['Liberation_Serif','Noto_Sans_CJK_SC',serif] text-[12px] leading-4 text-black">
      <div className="flex min-w-0 flex-1 flex-col rounded-t-[6px] bg-[#0a4de6]">
        <TitleBar />
        <div className="mr-[3px] mb-[3px] ml-1 flex flex-1 flex-col overflow-hidden bg-[#ece9d8]">
          <div className="bg-linear-to-r from-[#9fbcf2] to-[#c5daff]">
            <nav className="flex h-6 items-center gap-[17px] pl-[14px]">
              {MENUS.map((m) => <button key={m} type="button">{m}</button>)}
            </nav>
            <TopToolbars />
          </div>
          <div className="flex flex-1 gap-[5px] pb-[6px]">
            <Sidebar />
            <Workspace />
          </div>
          <div className="flex h-[17px] items-center justify-between bg-[#9fb9ea] pr-[6px] pl-[5px]">
            <h2>节目0</h2>
            <button type="button" aria-label="固定"><PinIcon /></button>
          </div>
          <Properties />
          <StatusBar />
        </div>
      </div>
    </div>
  );
}
